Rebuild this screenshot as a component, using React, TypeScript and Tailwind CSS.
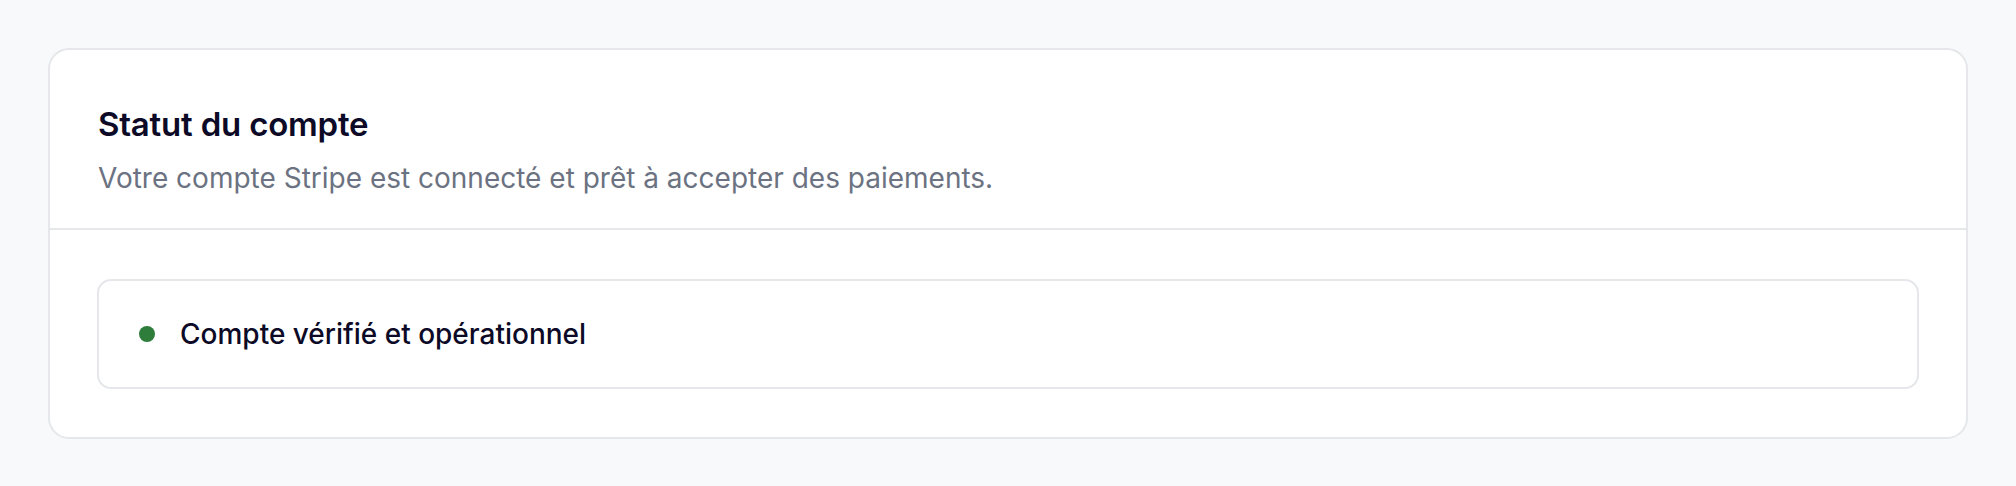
import React from "react";

export default function App() {
  return (
    <div
      className="min-h-screen bg-[#f8f9fb] p-[48px]"
      style={{ fontFamily: "Inter, 'Noto Sans', sans-serif" }}
    >
      <div className="rounded-[21px] border-2 border-[#e5e7eb] bg-white">
        {/* Header */}
        <div className="border-b-2 border-[#e5e7eb] px-[48px] pt-[54px] pb-[30px]">
          <h2 className="text-[33px] leading-[40px] font-semibold tracking-[-0.2px] text-[#0c0a26]">
            Statut du compte
          </h2>
          <p className="mt-[14px] text-[28px] leading-[40px] text-[#6b7281]">
            Votre compte Stripe est connecté et prêt à accepter des paiements.
          </p>
        </div>

        {/* Content */}
        <div className="px-[47px] pt-[49px] pb-[48px]">
          <div className="flex items-center gap-[25px] rounded-[14px] border-2 border-[#e5e7eb] px-[40px] py-[33px]">
            <span className="h-[16px] w-[16px] shrink-0 rounded-full bg-[#2e7d3a]" />
            <span className="text-[28px] leading-[40px] font-medium text-[#0c0a26]">
              Compte vérifié et opérationnel
            </span>
          </div>
        </div>
      </div>
    </div>
  );
}
